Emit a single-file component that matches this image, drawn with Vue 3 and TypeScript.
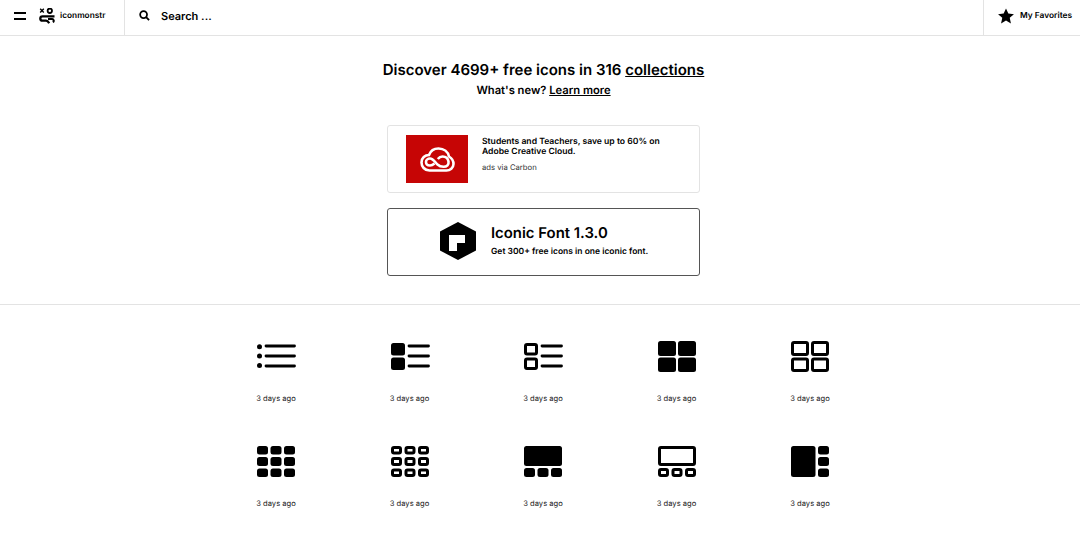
<script setup lang="ts">
interface Box {
  x: number;
  y: number;
  w: number;
  h: number;
  hollow?: boolean;
}

interface GridIcon {
  id: string;
  dots?: number[];
  lines?: { x1: number; x2: number; ys: number[] };
  boxes: Box[];
}

// three small blocks side by side, used by most of the layout icons
const smallRow = (y: number, h: number, hollow = false): Box[] =>
  [1, 14.5, 28].map((x) => ({ x, y, w: 11, h, hollow }));

const hollowBox = (x: number, y: number, w: number, h: number): Box => ({ x, y, w, h, hollow: true });

const icons: GridIcon[] = [
  { id: 'list', dots: [9.8, 19, 28.4], lines: { x1: 10, x2: 38.5, ys: [9, 19, 29] }, boxes: [] },
  {
    id: 'list-thumb',
    lines: { x1: 19, x2: 38.5, ys: [9, 19, 29] },
    boxes: [
      { x: 1, y: 6, w: 14, h: 12.5 },
      { x: 1, y: 20.5, w: 14, h: 12.5 },
    ],
  },
  {
    id: 'list-thumb-outline',
    lines: { x1: 19, x2: 38.5, ys: [9, 19, 29] },
    boxes: [hollowBox(1, 6, 14, 12.5), hollowBox(1, 20.5, 14, 12.5)],
  },
  {
    id: 'grid-2',
    boxes: [
      { x: 1, y: 4, w: 18, h: 15 },
      { x: 21, y: 4, w: 18, h: 15 },
      { x: 1, y: 20.5, w: 18, h: 14.5 },
      { x: 21, y: 20.5, w: 18, h: 14.5 },
    ],
  },
  {
    id: 'grid-2-outline',
    boxes: [
      hollowBox(1, 4, 18, 15),
      hollowBox(21, 4, 18, 15),
      hollowBox(1, 20.5, 18, 14.5),
      hollowBox(21, 20.5, 18, 14.5),
    ],
  },
  { id: 'grid-3', boxes: [...smallRow(4, 8.5), ...smallRow(15, 9), ...smallRow(26.5, 8.5)] },
  {
    id: 'grid-3-outline',
    boxes: [...smallRow(4, 8.5, true), ...smallRow(15, 9, true), ...smallRow(26.5, 8.5, true)],
  },
  { id: 'hero', boxes: [{ x: 1, y: 4, w: 38, h: 20 }, ...smallRow(26, 9)] },
  { id: 'hero-outline', boxes: [hollowBox(1, 4, 38, 20), ...smallRow(26, 9, true)] },
  {
    id: 'side',
    boxes: [
      { x: 1, y: 4, w: 24.5, h: 31 },
      { x: 28, y: 4, w: 11, h: 8.5 },
      { x: 28, y: 15, w: 11, h: 9 },
      { x: 28, y: 26.5, w: 11, h: 8.5 },
    ],
  },
];
</script>

<template>
  <div class="page">
    <header class="topbar">
      <div class="brand">
        <svg class="menu-icon" viewBox="0 0 12 8" width="12" height="8">
          <rect x="0" y="0" width="12" height="2" fill="#000" />
          <rect x="0" y="6" width="12" height="2" fill="#000" />
        </svg>
        <svg class="logo-icon" viewBox="0 0 16 16" width="16" height="16">
          <path d="M1.2 .8l3.6 3.6M4.800 .8L1.200 4.400" stroke="#000" stroke-width="1.4" fill="none" />
          <circle cx="10.800" cy="2.800" r="2.200" stroke="#000" stroke-width="1.800" fill="none" />
          <path
            d="M15.500 8.300H3.500a2.200 2.200 0 0 0 0 4.400h3.500c1.500 0 2.300 1 3.200 2.600"
            stroke="#000"
            stroke-width="2.300"
            fill="none"
          />
          <path d="M9 11h3.800a1.700 1.700 0 0 1 1 3.200" stroke="#000" stroke-width="2" fill="none" />
        </svg>
        <span class="brand-name">iconmonstr</span>
      </div>
      <div class="search">
        <svg viewBox="0 0 24 24" width="11" height="11">
          <circle cx="10" cy="10" r="7.500" stroke="#000" stroke-width="3.800" fill="none" />
          <path d="M15.500 15.500L22 22" stroke="#000" stroke-width="4" fill="none" />
        </svg>
        <span class="search-label">Search ...</span>
      </div>
      <div class="favorites">
        <svg viewBox="0 0 24 24" width="16" height="16">
          <path d="M12 .6l3.500 7.700 8.400.9-6.300 5.600 1.800 8.300L12 18.900l-7.400 4.200 1.800-8.300L.1 9.200l8.400-.9z" fill="#000" />
        </svg>
        <span class="favorites-label">My Favorites</span>
      </div>
    </header>

    <section class="intro">
      <h1>Discover 4699+ free icons in 316 <a href="#">collections</a></h1>
      <p class="whats-new">What's new? <a href="#">Learn more</a></p>

      <div class="ad-card">
        <div class="ad-image">
          <svg viewBox="0 0 35 25" width="35" height="25">
            <path
              d="M9.500 23.500C4.500 23.500 1.500 19.500 1.500 15.500C1.500 11 5 8 9 8C10.500 3.800 14.500 1.500 18.500 1.500C24 1.500 28 5 29 9.500C31.500 11 33.500 13.500 33.500 17C33.500 20.800 30 23.500 26.500 23.500Z"
              fill="none"
              stroke="#fff"
              stroke-width="2.600"
            />
            <path
              d="M14.500 16.500C13 17.800 11.800 18.500 10 18.500C7.800 18.500 6 17.200 6 15C6 12.800 8 11.500 10 11.500C13 11.500 15 15 17.500 17.500C19.300 19.200 21 19.800 23.500 19.800C27 19.800 29 17.500 28.500 14.500C28 11.500 25.500 9.500 22.500 9.500C20.500 9.500 19 10.500 17.800 12"
              fill="none"
              stroke="#fff"
              stroke-width="2.600"
            />
          </svg>
        </div>
        <div class="ad-copy">
          <p class="ad-text">Students and Teachers, save up to 60% on Adobe Creative Cloud.</p>
          <p class="ad-via">ads via Carbon</p>
        </div>
      </div>

      <div class="promo-card">
        <svg class="promo-icon" viewBox="0 0 36 38" width="36" height="38">
          <path d="M18 0l18 9.500v19L18 38 0 28.500v-19z" fill="#000" />
          <path d="M9 13h16v8h-8v8H9z" fill="#fff" />
        </svg>
        <div class="promo-copy">
          <p class="promo-title">Iconic Font 1.3.0</p>
          <p class="promo-text">Get 300+ free icons in one iconic font.</p>
        </div>
      </div>
    </section>

    <main class="icon-grid">
      <div v-for="icon in icons" :key="icon.id" class="icon-cell">
        <svg viewBox="0 0 40 40" width="40" height="40">
          <circle v-for="cy in icon.dots" :key="cy" cx="3.500" :cy="cy" r="2.500" fill="#000" />
          <template v-if="icon.lines">
            <line
              v-for="y in icon.lines.ys"
              :key="y"
              :x1="icon.lines.x1"
              :x2="icon.lines.x2"
              :y1="y"
              :y2="y"
              stroke="#000"
              stroke-width="2.800"
              stroke-linecap="round"
            />
          </template>
          <template v-for="(box, i) in icon.boxes" :key="i">
            <rect
              v-if="box.hollow"
              :x="box.x + 1.5"
              :y="box.y + 1.5"
              :width="box.w - 3"
              :height="box.h - 3"
              rx="1.500"
              fill="none"
              stroke="#000"
              stroke-width="3"
            />
            <rect v-else :x="box.x" :y="box.y" :width="box.w" :height="box.h" rx="2.500" fill="#000" />
          </template>
        </svg>
        <span class="age">3 days ago</span>
      </div>
    </main>
  </div>
</template>

<style>
body {
  background: #fff;
}
</style>

<style scoped>
.page {
  font-family: Inter, "Liberation Sans", sans-serif;
  color: #000;
  height: 535px;
  overflow: hidden;
  text-rendering: geometricPrecision;
}

p,
h1 {
  margin: 0;
}

a {
  color: inherit;
}

.topbar {
  display: flex;
  align-items: stretch;
  height: 35px;
  border-bottom: 1px solid #e3e3e3;
}

.brand {
  display: flex;
  align-items: center;
  width: 125px;
  box-sizing: border-box;
  padding: 0 0 4px 14px;
  border-right: 1px solid #e3e3e3;
}

.menu-icon {
  margin-right: 13px;
}

.logo-icon {
  margin-right: 5px;
}

.brand-name {
  font-size: 8.3px;
  font-weight: 600;
}

.search {
  display: flex;
  align-items: center;
  flex: 1;
  padding: 0 0 4px 14px;
  gap: 11px;
}

.search-label {
  font-size: 11px;
  font-weight: 600;
}

.favorites {
  display: flex;
  align-items: center;
  width: 97px;
  box-sizing: border-box;
  padding: 0 0 4px 14px;
  gap: 6px;
  border-left: 1px solid #e3e3e3;
}

.favorites-label {
  font-size: 8.4px;
  font-weight: 600;
  white-space: nowrap;
}

.intro {
  display: flex;
  flex-direction: column;
  align-items: center;
  height: 269px;
  padding: 24px 0 0 7px;
  box-sizing: border-box;
  border-bottom: 1px solid #e3e3e3;
}

.intro h1 {
  font-size: 15px;
  line-height: 19px;
  font-weight: 600;
}

.whats-new {
  margin-top: 4px;
  font-size: 11.2px;
  line-height: 15px;
  font-weight: 600;
}

.ad-card {
  display: flex;
  align-items: center;
  width: 313px;
  height: 68px;
  box-sizing: border-box;
  margin-top: 27px;
  padding-left: 18px;
  border: 1px solid #e3e3e3;
  border-radius: 3px;
}

.ad-image {
  display: flex;
  align-items: center;
  justify-content: center;
  width: 62px;
  height: 48px;
  background: #c60505;
  flex-shrink: 0;
}

.ad-copy {
  margin: 0 0 9px 14px;
  width: 190px;
}

.ad-text {
  font-size: 8.6px;
  line-height: 10px;
  font-weight: 600;
}

.ad-via {
  margin-top: 6px;
  font-size: 7.7px;
  line-height: 10px;
  color: #333;
}

.promo-card {
  display: flex;
  align-items: center;
  width: 313px;
  height: 68px;
  box-sizing: border-box;
  margin-top: 15px;
  padding-left: 52px;
  gap: 15px;
  border: 1px solid #555;
  border-radius: 3px;
}

.promo-icon {
  margin-bottom: 2px;
}

.promo-copy {
  margin-bottom: 2px;
}

.promo-title {
  font-size: 14.9px;
  line-height: 18px;
  font-weight: 600;
}

.promo-text {
  margin-top: 5px;
  font-size: 8.5px;
  line-height: 11px;
  font-weight: 600;
}

.icon-grid {
  display: grid;
  grid-template-columns: repeat(5, 133.5px);
  grid-auto-rows: 105px;
  margin: 32px 0 0 209.25px;
}

.icon-cell {
  display: flex;
  flex-direction: column;
  align-items: center;
}

.age {
  margin-top: 16px;
  font-size: 7.6px;
  line-height: 12px;
  color: #222;
}
</style>
